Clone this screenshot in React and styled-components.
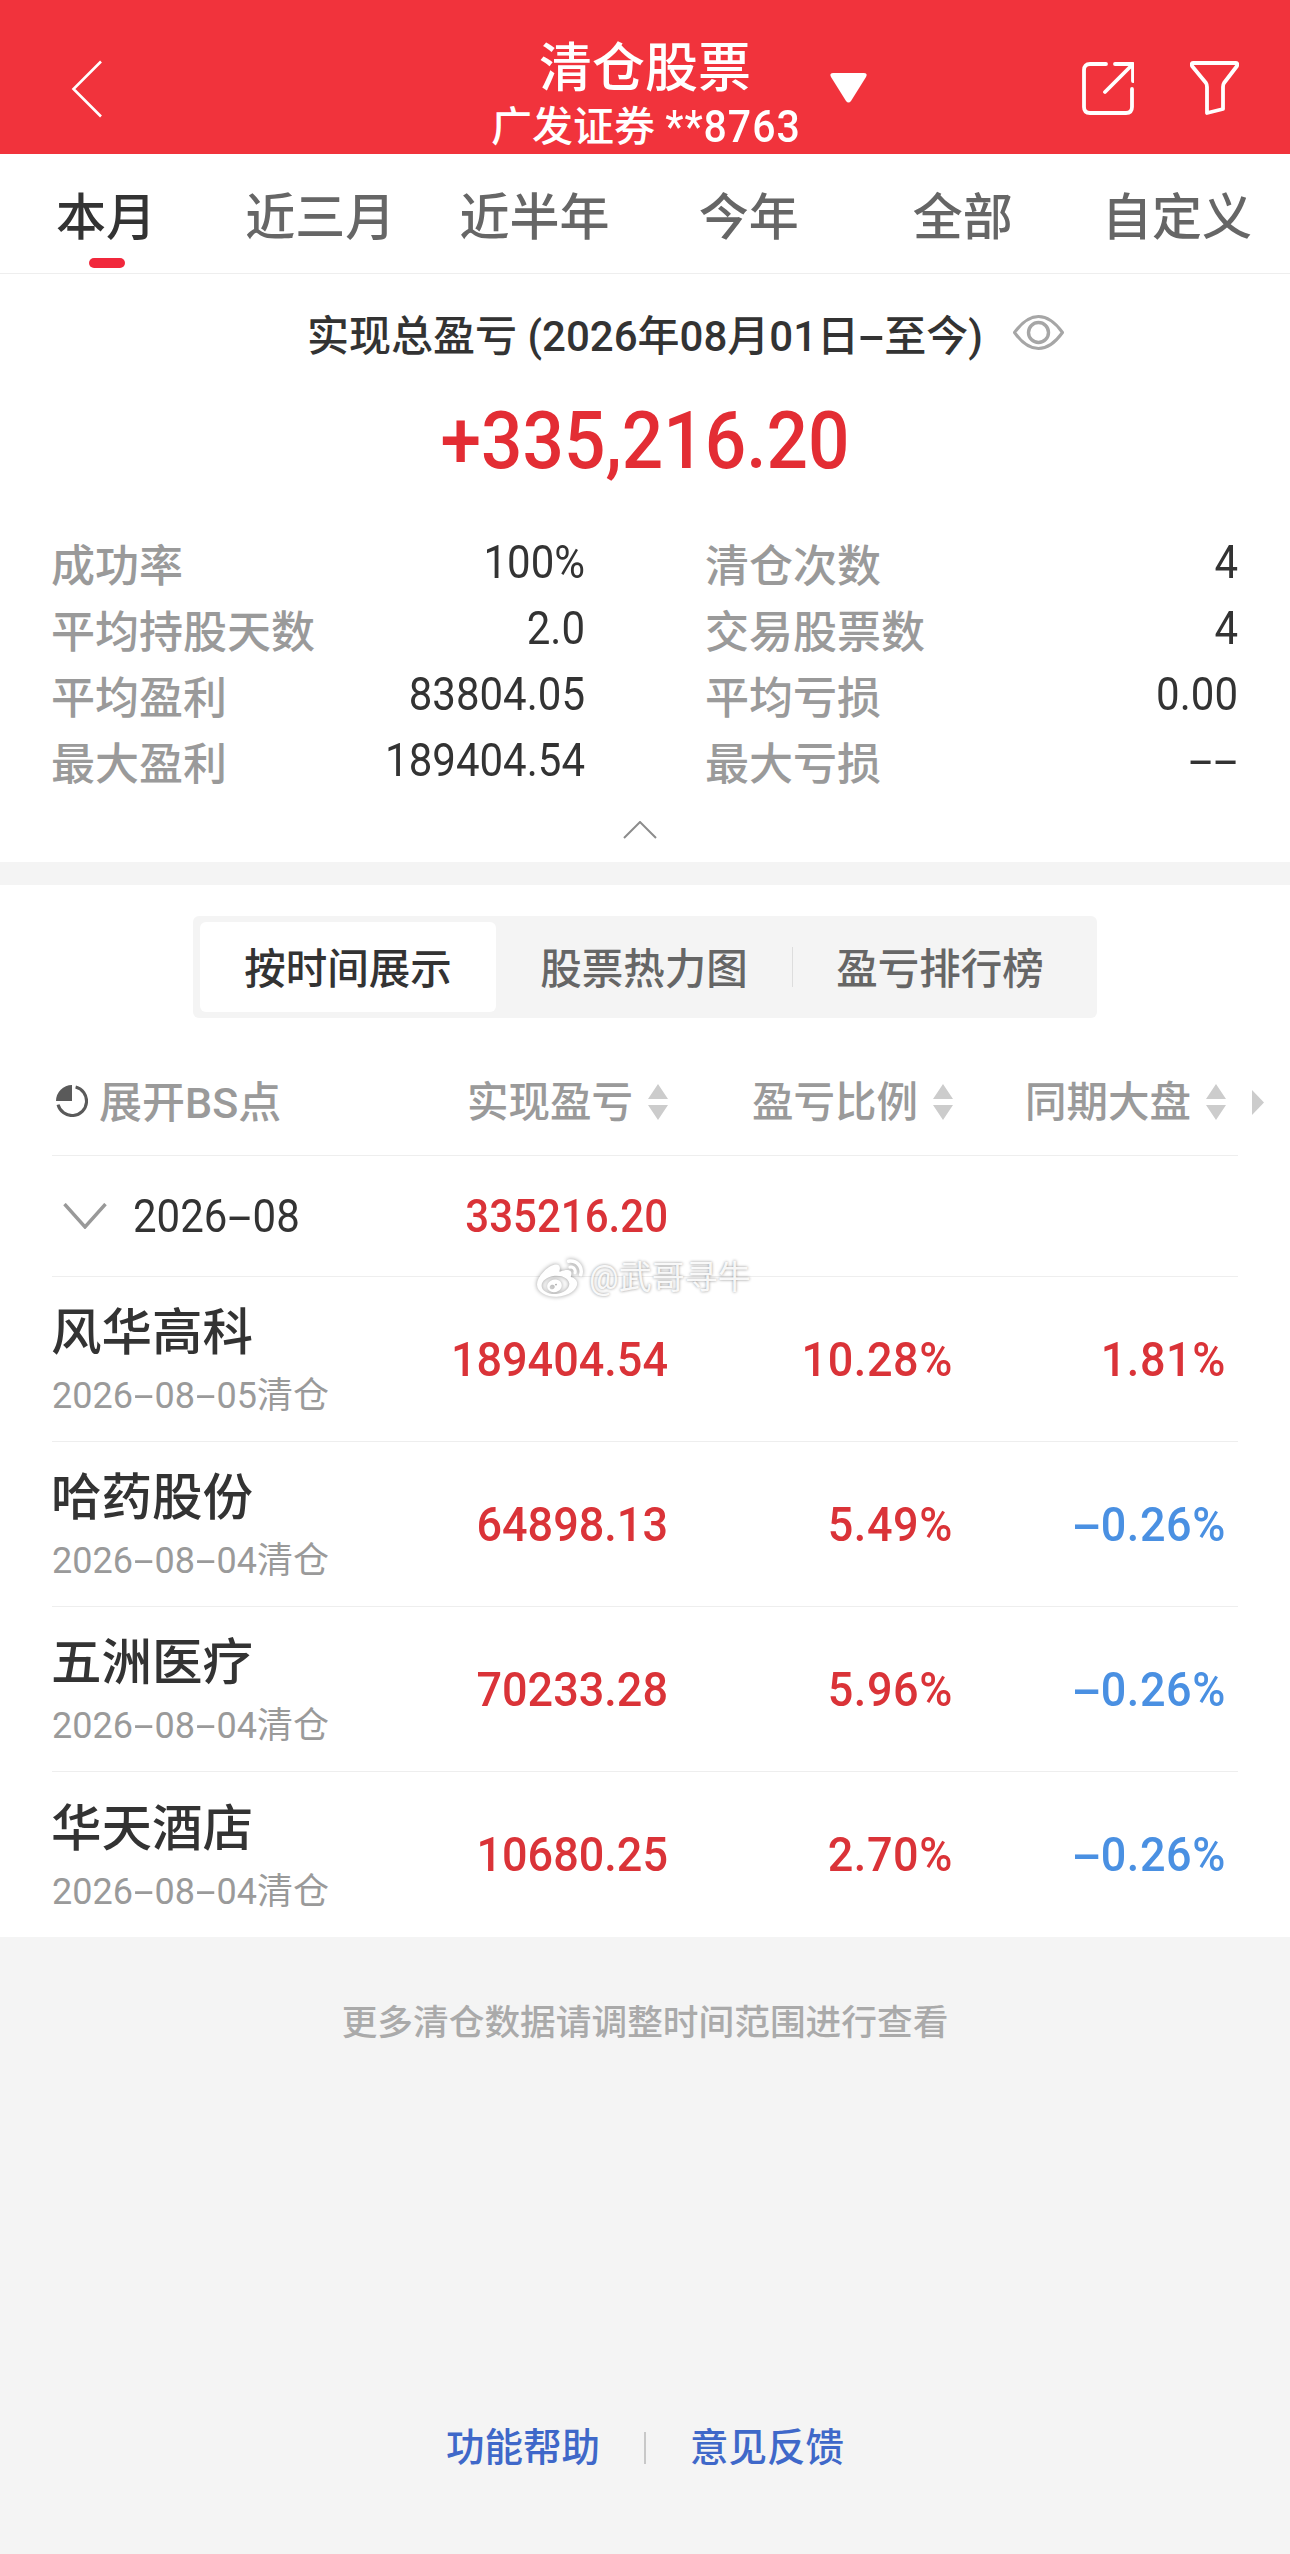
import React from 'react';
import styled, { createGlobalStyle } from 'styled-components';
import { SiSinaweibo } from 'react-icons/si';

const Global = createGlobalStyle`
  html, body { margin: 0; padding: 0; background: #f4f4f4; }
  * { box-sizing: border-box; }
  body { font-family: Roboto, "Noto Sans CJK SC", sans-serif; width: 1290px; }
`;

const Page = styled.div`
  position: relative;
  width: 1290px;
  height: 2554px;
  overflow: hidden;
  background: #f4f4f4;
`;

const Header = styled.header`
  height: 154px;
  background: #f1333c;
  color: #fff;
  display: grid;
  grid-template-columns: 1fr 308px 1fr;
  align-items: start;
`;
const BackIcon = styled.svg`
  display: block;
  margin: 60px 0 0 71px;
`;
const TitleBlock = styled.div`
  padding-top: 45px;
  text-align: center;
`;
const Title = styled.div`
  font-size: 53px;
  line-height: 48px;
  font-weight: 500;
`;
const SubTitle = styled.div`
  margin-top: 10px;
  font-size: 41px;
  line-height: 48px;
  font-weight: 500;
  white-space: nowrap;
`;
const AccountNo = styled.span`
  display: inline-block;
  letter-spacing: 1px;
  transform: scaleY(1.08);
`;
const HeaderRight = styled.div`
  display: flex;
  justify-content: space-between;
  padding: 0 51px 0 31px;
`;
const Caret = styled.svg`
  display: block;
  margin-top: 73px;
`;
const HeaderActions = styled.div`
  display: flex;
  gap: 56px;
  padding-top: 61px;
`;

const Tabs = styled.nav`
  height: 120px;
  margin-left: -1px;
  background: #fff;
  border-bottom: 1px solid #eeeeee;
  display: grid;
  grid-template-columns: repeat(6, 214.2px);
`;
const Tab = styled.div`
  position: relative;
  display: flex;
  align-items: center;
  justify-content: center;
  padding-bottom: 2px;
  font-size: 50px;
  font-weight: 500;
  color: ${(p) => (p.$active ? '#333333' : '#666666')};
  ${(p) =>
    p.$active
      ? `&::after { content: ""; position: absolute; left: 90px; top: 104px; width: 36px; height: 10px; border-radius: 5px; background: #f1283c; }`
      : ''}
`;

const Summary = styled.section`
  background: #fff;
  padding: 37px 52px 23px;
  margin-bottom: 23px;
  display: flex;
  flex-direction: column;
  align-items: center;
`;
const SummaryTitle = styled.div`
  display: flex;
  align-items: center;
  gap: 30px;
  height: 42px;
  padding-left: 81px;
  font-size: 42px;
  font-weight: 500;
  color: #333333;
  white-space: nowrap;
`;
const BigValue = styled.div`
  margin-top: 48px;
  font-size: 73px;
  line-height: 80px;
  font-weight: 500;
  color: #e32d34;
  transform: scaleY(1.09);
`;
const Stats = styled.div`
  margin-top: 49px;
  width: 100%;
  display: grid;
  grid-template-columns: 533px 532px;
  column-gap: 121px;
`;
const Stat = styled.div`
  display: flex;
  justify-content: space-between;
  align-items: center;
  height: 66px;
`;
const StatLabel = styled.span`
  margin-left: -1px;
  font-size: 44px;
  color: #9a9a9a;
  font-weight: 500;
`;
const StatValue = styled.span`
  display: inline-block;
  margin-top: -2px;
  font-size: 42px;
  color: #333333;
  transform: scaleY(1.08);
`;
const Collapse = styled.svg`
  display: block;
  margin: 27px 0 0 -11px;
`;

const Detail = styled.section`
  background: #fff;
  padding: 31px 52px 0;
`;
const Segments = styled.div`
  width: 904px;
  height: 102px;
  margin: 0 auto 0 141px;
  padding: 6px 9px 6px 7px;
  border-radius: 6px;
  background: #f4f4f4;
  display: grid;
  grid-template-columns: repeat(3, 296px);
`;
const Segment = styled.div`
  position: relative;
  display: flex;
  align-items: center;
  justify-content: center;
  padding-bottom: 2px;
  font-size: 41.5px;
  font-weight: 500;
  border-radius: 6px;
  color: ${(p) => (p.$active ? '#333333' : '#666666')};
  background: ${(p) => (p.$active ? '#ffffff' : 'transparent')};
  ${(p) =>
    p.$divider
      ? `&::before { content: ""; position: absolute; left: 0; top: 25px; height: 40px; width: 1px; background: #dddddd; }`
      : ''}
`;

const Columns = styled.div`
  display: grid;
  grid-template-columns: 366px 250px 285px 273px 12px;
  align-items: center;
  border-bottom: 1px solid #eeeeee;
`;
const TableHead = styled(Columns)`
  position: relative;
  height: 107px;
  margin-top: 31px;
`;
const ExpandBS = styled.div`
  display: flex;
  align-items: center;
  gap: 11px;
  padding: 0 0 6px 4px;
  font-size: 43px;
  font-weight: 500;
  color: #9a9a9a;
  svg {
    margin-top: 4px;
  }
`;
const SortHead = styled.div`
  display: flex;
  align-items: center;
  justify-content: flex-end;
  gap: 15px;
  padding-bottom: 6px;
  font-size: 41.5px;
  font-weight: 500;
  color: #9a9a9a;
  white-space: nowrap;
  svg {
    margin-top: 6px;
  }
`;
const ScrollHint = styled.svg`
  position: absolute;
  right: -26px;
  top: 41px;
`;
const MonthRow = styled(Columns)`
  height: 121px;
`;
const MonthCell = styled.div`
  display: flex;
  align-items: center;
  gap: 26px;
  padding-left: 11px;
  font-size: 42px;
  color: #333333;
`;
const MonthLabel = styled.span`
  display: inline-block;
  transform: scaleY(1.08);
`;
const MonthValue = styled.div`
  text-align: right;
  font-size: 42px;
  font-weight: 500;
  color: #da3338;
  transform: scaleY(1.08);
`;
const StockRow = styled(Columns)`
  height: 165px;
  border-bottom: ${(p) => (p.$last ? 'none' : '1px solid #eeeeee')};
`;
const StockName = styled.div`
  margin: 4px 0 0 -1px;
  font-size: 50.5px;
  line-height: 50px;
  font-weight: 500;
  color: #333333;
`;
const StockDate = styled.div`
  margin-top: 20px;
  font-size: 36px;
  line-height: 36px;
  color: #9a9a9a;
  white-space: nowrap;
`;
const Cell = styled.div`
  text-align: right;
  font-size: 45px;
  font-weight: 500;
  letter-spacing: ${(p) => (p.$pct ? '0.6px' : '0')};
  color: ${(p) => (p.$down ? '#4a90e2' : '#da3338')};
  transform: scaleY(1.08);
`;

const Footer = styled.footer`
  display: flex;
  flex-direction: column;
  align-items: center;
  padding-top: 66px;
`;
const Note = styled.div`
  font-size: 35.7px;
  line-height: 40px;
  color: #aaaaaa;
  font-weight: 500;
`;
const Links = styled.div`
  margin-top: 383px;
  display: flex;
  align-items: center;
  gap: 44px;
  font-size: 38.5px;
  line-height: 44px;
  font-weight: 500;
  color: #3f68c9;
`;
const LinkDivider = styled.span`
  width: 2px;
  height: 32px;
  background: #c8c8c8;
`;

const Watermark = styled.div`
  position: absolute;
  left: 537px;
  top: 1255px;
  display: flex;
  align-items: center;
  gap: 6px;
  font-size: 33px;
  line-height: 46px;
  color: rgba(255, 255, 255, 0.92);
  text-shadow: 0 0 3px rgba(0, 0, 0, 0.45);
  svg {
    filter: drop-shadow(0 0 2px rgba(0, 0, 0, 0.4));
  }
`;

const DashMark = styled.span`
  display: inline-block;
  width: 0.6em;
  text-align: center;
  transform: scaleX(2);
`;

const dashed = (text) =>
  text.split('-').flatMap((part, i) =>
    i === 0 ? [part] : [<DashMark key={i}>-</DashMark>, part]
  );

const SortIcon = () => (
  <svg width="20" height="36" viewBox="0 0 20 36">
    <path d="M10 0 L20 15 H0 Z M0 21 H20 L10 36 Z" fill="#cccccc" />
  </svg>
);

const tabs = ['本月', '近三月', '近半年', '今年', '全部', '自定义'];
const stats = [
  ['成功率', '100%'],
  ['清仓次数', '4'],
  ['平均持股天数', '2.0'],
  ['交易股票数', '4'],
  ['平均盈利', '83804.05'],
  ['平均亏损', '0.00'],
  ['最大盈利', '189404.54'],
  ['最大亏损', '--'],
];
const stocks = [
  { name: '风华高科', date: '2026-08-05清仓', pnl: '189404.54', ratio: '10.28%', market: '1.81%' },
  { name: '哈药股份', date: '2026-08-04清仓', pnl: '64898.13', ratio: '5.49%', market: '-0.26%', down: true },
  { name: '五洲医疗', date: '2026-08-04清仓', pnl: '70233.28', ratio: '5.96%', market: '-0.26%', down: true },
  { name: '华天酒店', date: '2026-08-04清仓', pnl: '10680.25', ratio: '2.70%', market: '-0.26%', down: true },
];

export default function App() {
  return (
    <Page>
      <Global />
      <Header>
        <div>
          <BackIcon width="32" height="58" viewBox="0 0 32 58" fill="none">
            <path d="M30 1.5 L2.5 29 L30 56.5" stroke="#fff" strokeWidth="2.6" />
          </BackIcon>
        </div>
        <TitleBlock>
          <Title>清仓股票</Title>
          <SubTitle>广发证券 <AccountNo>**8763</AccountNo></SubTitle>
        </TitleBlock>
        <HeaderRight>
          <Caret width="37" height="30" viewBox="0 0 37 30">
            <path d="M3 0 H34 Q38 0 36 4 L21 28 Q18.500 31 16 28 L1 4 Q-1 0 3 0 Z" fill="#fff" />
          </Caret>
          <HeaderActions>
            <svg width="52" height="54" viewBox="0 0 52 54" fill="none" stroke="#fff" strokeWidth="3.8" strokeLinecap="round" strokeLinejoin="round">
              <path d="M24 3 H8 Q2 3 2 9 V46 Q2 52 8 52 H44 Q50 52 50 46 V28" />
              <path d="M23 31 L50 4 M33 3 H51 V20" />
            </svg>
            <svg width="49" height="55" viewBox="0 0 49 55" fill="none" stroke="#fff" strokeWidth="3.8" strokeLinejoin="round">
              <path d="M3 2 H46 Q48 2 47 5 L34 22 Q33 23.500 33 26 V48 L17 52 V26 Q17 23.500 16 22 L2 5 Q1 2 3 2 Z" />
            </svg>
          </HeaderActions>
        </HeaderRight>
      </Header>

      <Tabs>
        {tabs.map((t, i) => (
          <Tab key={t} $active={i === 0}>{t}</Tab>
        ))}
      </Tabs>

      <Summary>
        <SummaryTitle>
          <span>实现总盈亏 (2026年08月01日{dashed('-')}至今)</span>
          <svg width="51" height="35" viewBox="0 0 51 35" fill="none" stroke="#a6a6a6" strokeWidth="3">
            <path d="M1.500 17.500 Q13 1.500 25.500 1.500 Q38 1.500 49.500 17.500 Q38 33.500 25.500 33.500 Q13 33.500 1.500 17.500 Z" />
            <circle cx="25.500" cy="17.500" r="10" strokeWidth="3.4" />
          </svg>
        </SummaryTitle>
        <BigValue>+335,216.20</BigValue>
        <Stats>
          {stats.map(([label, value]) => (
            <Stat key={label}>
              <StatLabel>{label}</StatLabel>
              <StatValue>{dashed(value)}</StatValue>
            </Stat>
          ))}
        </Stats>
        <Collapse width="34" height="18" viewBox="0 0 34 18" fill="none">
          <path d="M1 17 L17 1 L33 17" stroke="#8c8c8c" strokeWidth="2" />
        </Collapse>
      </Summary>

      <Detail>
        <Segments>
          <Segment $active>按时间展示</Segment>
          <Segment>股票热力图</Segment>
          <Segment $divider>盈亏排行榜</Segment>
        </Segments>

        <TableHead>
          <ExpandBS>
            <svg width="32" height="32" viewBox="0 0 31 31" fill="none">
              <path d="M15.500 0 V15.500 H0 A15.500 15.500 0 0 1 15.500 0 Z" fill="#5a5a5a" />
              <path d="M19 2 A14 14 0 1 1 2 19" stroke="#5a5a5a" strokeWidth="3" />
            </svg>
            展开BS点
          </ExpandBS>
          <SortHead>实现盈亏<SortIcon /></SortHead>
          <SortHead>盈亏比例<SortIcon /></SortHead>
          <SortHead>同期大盘<SortIcon /></SortHead>
          <ScrollHint width="12" height="25" viewBox="0 0 12 25">
            <path d="M0 0 L12 12.500 L0 25 Z" fill="#cccccc" />
          </ScrollHint>
        </TableHead>

        <MonthRow>
          <MonthCell>
            <svg width="44" height="26" viewBox="0 0 44 26" fill="none">
              <path d="M1.500 1 L22 24 L42.500 1" stroke="#999999" strokeWidth="3.400" />
            </svg>
            <MonthLabel>{dashed('2026-08')}</MonthLabel>
          </MonthCell>
          <MonthValue>335216.20</MonthValue>
        </MonthRow>

        {stocks.map((s, i) => (
          <StockRow key={s.name} $last={i === stocks.length - 1}>
            <div>
              <StockName>{s.name}</StockName>
              <StockDate>{dashed(s.date)}</StockDate>
            </div>
            <Cell>{s.pnl}</Cell>
            <Cell $pct>{s.ratio}</Cell>
            <Cell $pct $down={s.down}>{dashed(s.market)}</Cell>
          </StockRow>
        ))}
      </Detail>

      <Footer>
        <Note>更多清仓数据请调整时间范围进行查看</Note>
        <Links>
          <span>功能帮助</span>
          <LinkDivider />
          <span>意见反馈</span>
        </Links>
      </Footer>

      <Watermark>
        <SiSinaweibo size={46} color="#ffffff" />
        <span>@武哥寻牛</span>
      </Watermark>
    </Page>
  );
}
